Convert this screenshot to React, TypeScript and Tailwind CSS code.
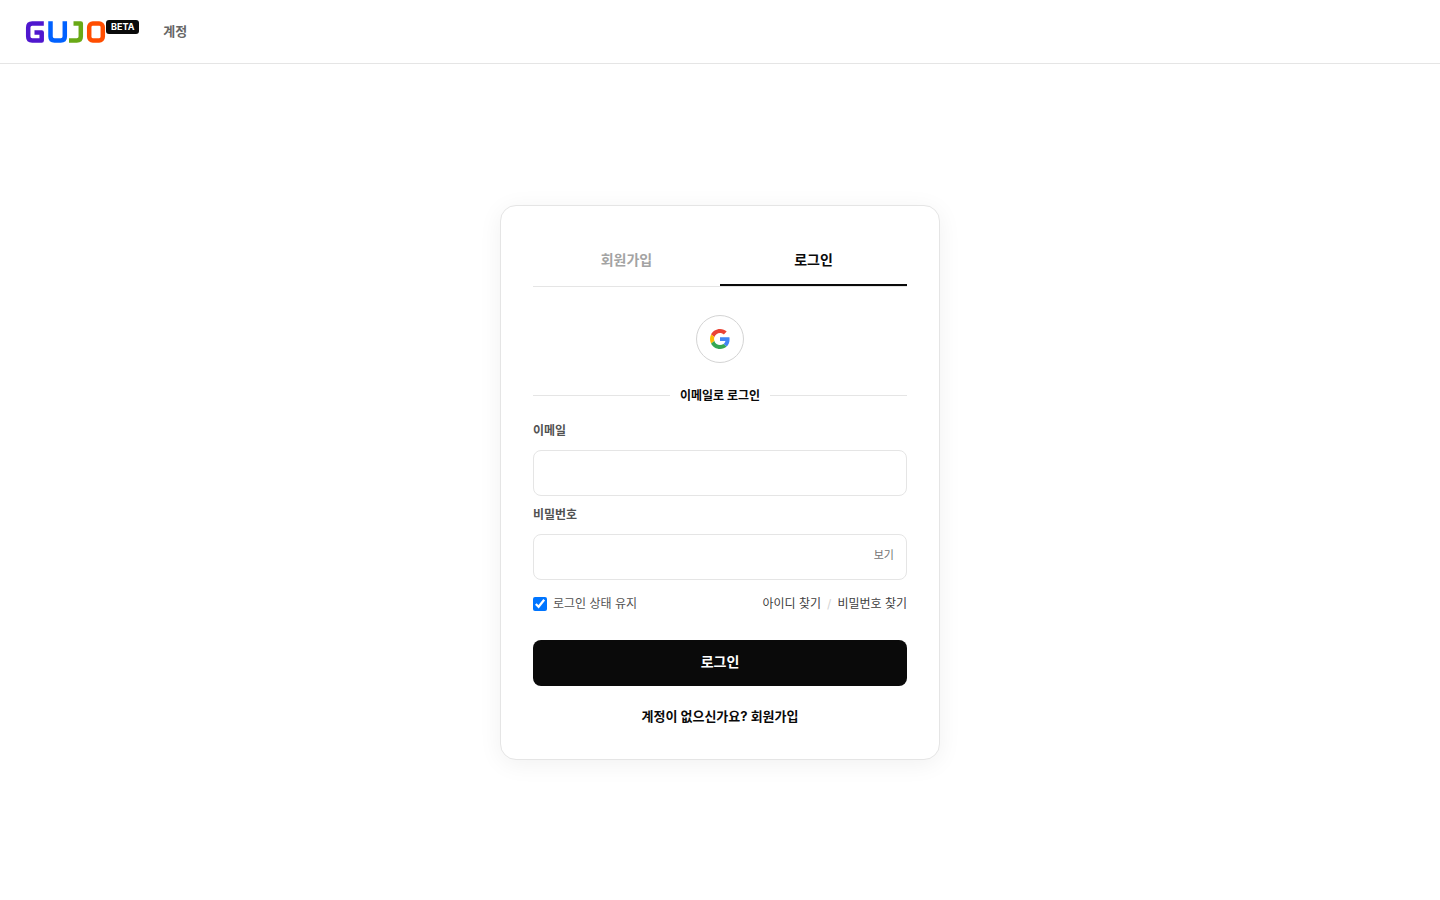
import { useState, type ReactNode } from "react";

export default function App() {
    return (
        <div className="min-h-screen flex flex-col bg-white text-[#0a0a0a] font-['Inter','Noto_Sans_CJK_KR',sans-serif]">
            <Header />
            <main className="flex-1 flex items-center justify-center px-4">
                <LoginCard />
            </main>
        </div>
    )
}

function Header() {
    return (
        <header className="w-full h-16 flex items-center px-6 border-b border-[#e5e5e5]">
            <a href="/" className="flex items-start" aria-label="GUJO">
                <Logo />
                <span className="rounded-[3px] bg-[#0a0a0a] px-[5px] text-[9px] leading-[14px] font-bold text-white">BETA</span>
            </a>
            <a href="/account" className="ml-6 text-[13px] font-semibold text-[#666666]">계정</a>
        </header>
    )
}

function LoginCard() {
    const [showPassword, setShowPassword] = useState(false);

    return (
        <section className="w-full max-w-[440px] rounded-2xl border border-[#e5e5e5] bg-white p-8 shadow-[0_4px_24px_rgba(0,0,0,0.06)]">
            <div className="flex border-b border-[#e5e5e5]" role="tablist">
                <Tab text="회원가입" />
                <Tab text="로그인" active />
            </div>

            <div className="mt-7 flex justify-center">
                <button type="button" aria-label="Google" className="size-12 flex items-center justify-center rounded-full border border-[#d4d4d4] bg-white">
                    <GoogleIcon />
                </button>
            </div>

            <div className="mt-[23px] flex items-center gap-[10px]">
                <span className="h-px flex-1 bg-[#e5e5e5]" />
                <span className="text-xs leading-5 font-bold">이메일로 로그인</span>
                <span className="h-px flex-1 bg-[#e5e5e5]" />
            </div>

            <form className="mt-[14px]" onSubmit={(e) => e.preventDefault()}>
                <Field id="email" label="이메일">
                    <input id="email" type="email" className="block w-full h-[46px] rounded-lg border border-[#e5e5e5] px-3 text-sm outline-none focus:border-[#0a0a0a]" />
                </Field>
                <div className="mt-2">
                    <Field id="password" label="비밀번호">
                        <div className="flex h-[46px] rounded-lg border border-[#e5e5e5] focus-within:border-[#0a0a0a]">
                            <input id="password" type={showPassword ? "text" : "password"} className="min-w-0 flex-1 px-3 text-sm outline-none" />
                            <button type="button" className="px-3 pb-[2px] text-[11px] text-[#737373]" onClick={() => setShowPassword(!showPassword)}>
                                {showPassword ? "숨기기" : "보기"}
                            </button>
                        </div>
                    </Field>
                </div>

                <div className="mt-[14px] flex items-center justify-between text-xs leading-5">
                    <label className="flex items-center gap-[6px] text-[#525252]">
                        <input type="checkbox" defaultChecked className="size-[14px]" />
                        로그인 상태 유지
                    </label>
                    <div className="flex gap-[6px] text-[#404040]">
                        <a href="/find-id">아이디 찾기</a>
                        <span className="text-[#d4d4d4]">/</span>
                        <a href="/find-password">비밀번호 찾기</a>
                    </div>
                </div>

                <button type="submit" className="mt-[26px] w-full h-[46px] rounded-lg bg-[#0a0a0a] pb-[2px] text-sm font-bold text-white">로그인</button>
            </form>

            <button type="button" className="mt-5 block w-full text-[13px] leading-[21px] font-bold">계정이 없으신가요? 회원가입</button>
        </section>
    )
}

function Tab({ text, active } : { text: string, active?: boolean }) {
    return (
        <button
            type="button"
            role="tab"
            aria-selected={!!active}
            className={active
                ? "h-12 flex-1 border-b-2 border-[#0a0a0a] pb-[2px] text-sm font-bold text-[#0a0a0a]"
                : "h-12 flex-1 border-b-2 border-transparent pb-[2px] text-sm font-bold text-[#a3a3a3]"}
        >
            {text}
        </button>
    )
}

function Field({ id, label, children } : { id: string, label: string, children: ReactNode }) {
    return (
        <div>
            <label htmlFor={id} className="mb-2 block text-xs leading-[22px] font-semibold text-[#525252]">{label}</label>
            {children}
        </div>
    )
}

function Logo() {
    return (
        <svg width="82" height="24" viewBox="0 0 82 24" fill="none" strokeWidth="4.5" aria-hidden="true">
            <path d="M19.8 3.6H8.2Q4.2 3.6 4.2 7.6V16.4Q4.2 20.4 8.2 20.4H17.7V12.6H10.5" stroke="#4f17ce" strokeLinejoin="round" />
            <path d="M26.5 1.3V16.4Q26.5 20.4 30.5 20.4H36.8Q40.8 20.4 40.8 16.4V1.3" stroke="#0061ff" />
            <path d="M49.5 3.6H56.8V16.4Q56.8 20.4 52.8 20.4H45" stroke="#69a916" strokeLinejoin="round" />
            <rect x="65.2" y="3.6" width="13.6" height="16.8" rx="3.6" stroke="#ff4d00" />
        </svg>
    )
}

function GoogleIcon() {
    return (
        <svg width="20" height="20" viewBox="0 0 48 48" aria-hidden="true">
            <path fill="#EA4335" d="M24 9.5c3.54 0 6.71 1.22 9.21 3.6l6.85-6.85C35.9 2.38 30.47 0 24 0 14.62 0 6.51 5.38 2.56 13.22l7.98 6.19C12.43 13.72 17.74 9.5 24 9.5z" />
            <path fill="#4285F4" d="M46.98 24.55c0-1.57-.15-3.09-.38-4.55H24v9.02h12.94c-.58 2.96-2.26 5.48-4.78 7.18l7.73 6c4.51-4.18 7.09-10.36 7.09-17.65z" />
            <path fill="#FBBC05" d="M10.53 28.59c-.48-1.45-.76-2.99-.76-4.59s.27-3.14.76-4.59l-7.98-6.19C.92 16.46 0 20.12 0 24c0 3.88.92 7.54 2.56 10.78l7.97-6.19z" />
            <path fill="#34A853" d="M24 48c6.48 0 11.93-2.13 15.89-5.81l-7.73-6c-2.15 1.45-4.92 2.3-8.16 2.3-6.26 0-11.57-4.22-13.47-9.91l-7.98 6.19C6.51 42.62 14.62 48 24 48z" />
        </svg>
    )
}
